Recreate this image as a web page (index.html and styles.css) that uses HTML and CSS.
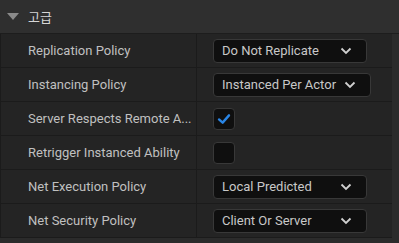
FILE: index.html
```html
<!DOCTYPE html>
<html lang="ko">
<head>
    <meta charset="UTF-8">
    <title>고급</title>
    <link rel="stylesheet" href="styles.css">
</head>
<body>
    <div class="panel">
        <div class="section-head">
            <span class="arrow"></span>
            <span class="section-title">고급</span>
        </div>

        <div class="row">
            <div class="label">Replication Policy</div>
            <div class="value">
                <div class="combo"><span>Do Not Replicate</span><svg class="chev" viewBox="0 0 12 8"><path d="M1.5 1.5 L6 6 L10.5 1.5"/></svg></div>
            </div>
        </div>

        <div class="row">
            <div class="label">Instancing Policy</div>
            <div class="value">
                <div class="combo"><span>Instanced Per Actor</span><svg class="chev" viewBox="0 0 12 8"><path d="M1.5 1.5 L6 6 L10.5 1.5"/></svg></div>
            </div>
        </div>

        <div class="row">
            <div class="label" title="Server Respects Remote Ability Cancellation">Server Respects Remote A...</div>
            <div class="value">
                <div class="check"><svg viewBox="0 0 22 22"><path d="M5.5 11.5 L9.5 15 L16.5 7"/></svg></div>
            </div>
        </div>

        <div class="row">
            <div class="label">Retrigger Instanced Ability</div>
            <div class="value">
                <div class="check"></div>
            </div>
        </div>

        <div class="row">
            <div class="label">Net Execution Policy</div>
            <div class="value">
                <div class="combo"><span>Local Predicted</span><svg class="chev" viewBox="0 0 12 8"><path d="M1.5 1.5 L6 6 L10.5 1.5"/></svg></div>
            </div>
        </div>

        <div class="row">
            <div class="label">Net Security Policy</div>
            <div class="value">
                <div class="combo"><span>Client Or Server</span><svg class="chev" viewBox="0 0 12 8"><path d="M1.5 1.5 L6 6 L10.5 1.5"/></svg></div>
            </div>
        </div>
    </div>
</body>
</html>
```

FILE: styles.css
```css
body {
    margin: 0;
    background-color: #2b2b2b;
    font-family: Roboto, "Noto Sans CJK KR", sans-serif;
    font-size: 13px;
    color: #c0c0c0;
}

.panel {
    width: 399px;
    height: 243px;
    overflow: hidden;
    background-color: #2b2b2b;
}

.section-head {
    height: 33px;
    display: flex;
    align-items: center;
    background-color: #2f2f2f;
    border-bottom: 1px solid #1d1d1d;
}

.arrow {
    width: 0;
    height: 0;
    margin-left: 7px;
    border-left: 6px solid transparent;
    border-right: 6px solid transparent;
    border-top: 7px solid #8a8a8a;
}

.section-title {
    margin-left: 9px;
    font-size: 13px;
    color: #d6d6d6;
}

.row {
    height: 33px;
    display: flex;
    background-color: #242424;
    border-bottom: 1px solid #1b1b1b;
    border-left: 1px solid #1b1b1b;
    margin-right: 7px;
}

.label {
    width: 168px;
    padding-left: 27px;
    border-right: 1px solid #1b1b1b;
    line-height: 34px;
    white-space: nowrap;
    color: #c0c0c0;
}

.value {
    flex: 1;
    display: flex;
    align-items: center;
    padding-left: 16px;
}

.combo {
    min-width: 154px;
    height: 24px;
    box-sizing: border-box;
    display: flex;
    align-items: center;
    padding: 0 14px 0 8px;
    gap: 8px;
    background-color: #0f0f0f;
    border: 1px solid #383838;
    border-radius: 4px;
    color: #c8c8c8;
    white-space: nowrap;
}

.combo span {
    flex: 1;
}

.chev {
    width: 12px;
    height: 8px;
    fill: none;
    stroke: #d0d0d0;
    stroke-width: 1.8;
}

.check {
    width: 22px;
    height: 22px;
    box-sizing: border-box;
    background-color: #0f0f0f;
    border: 1px solid #383838;
    border-radius: 4px;
}

.check svg {
    width: 20px;
    height: 20px;
    fill: none;
    stroke: #2a86e6;
    stroke-width: 2.6;
    stroke-linecap: round;
    stroke-linejoin: round;
}
```
